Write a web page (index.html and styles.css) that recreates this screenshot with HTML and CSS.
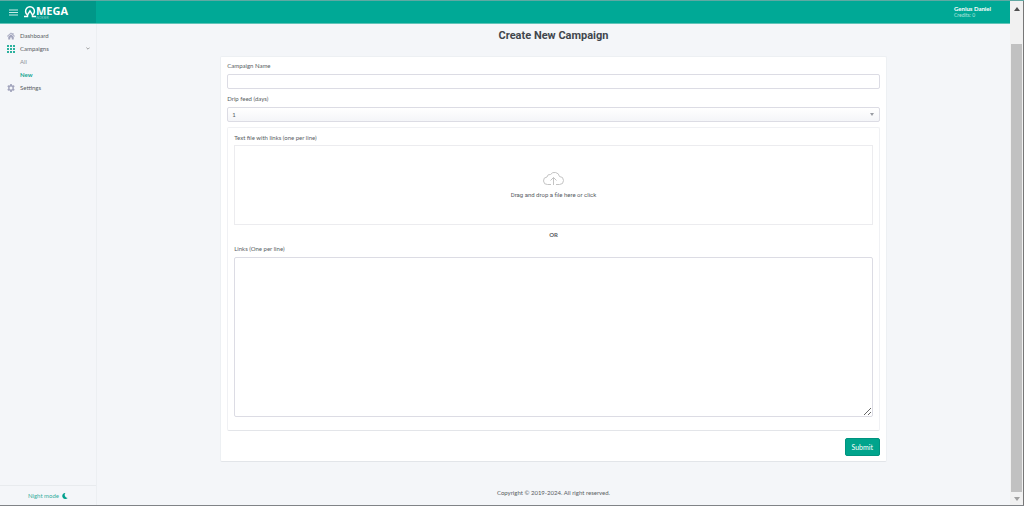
FILE: index.html
```html
<!DOCTYPE html>
<html lang="en">
<head>
<meta charset="utf-8">
<title>Create New Campaign</title>
<link rel="stylesheet" href="styles.css">
</head>
<body>
<div class="app">
  <header class="topbar">
    <div class="brand">
      <button class="menu" type="button" aria-label="Toggle menu"><svg viewBox="0 0 9 7"><path d="M0 1h9M0 3.5h9M0 6h9"/></svg></button>
      <a class="logo" href="#">
        <svg class="omega" viewBox="0 0 13 12"><path d="M0 10.800h3.800V9.200A4.800 4.800 0 1 1 9.200 9.200v1.600H13"/><path d="M3.800 9.200l2.700-4.400 2.700 4.400"/></svg>
        <span class="words"><span class="name">MEGA</span><span class="tag">INDEXER</span></span>
      </a>
    </div>
    <div class="user"><strong>Genius Daniel</strong><span>Credits: 0</span></div>
  </header>
  <aside class="sidebar">
    <nav class="nav">
      <a class="item" href="#"><svg class="icon" viewBox="0 0 16 16"><path d="M8 1l3 2.700V2h2v3.500L16 8.200l-1 1.100L8 3.200 1 9.300 0 8.200z"/><path d="M8 4.500l5.500 4.800V15h-4v-4h-3v4h-4V9.300z"/></svg>Dashboard</a>
      <a class="item" href="#"><svg class="icon green" viewBox="0 0 16 16"><path d="M0 0h4v4H0zM6 0h4v4H6zM12 0h4v4h-4zM0 6h4v4H0zM6 6h4v4H6zM12 6h4v4h-4zM0 12h4v4H0zM6 12h4v4H6zM12 12h4v4h-4z"/></svg>Campaigns<svg class="chevron" viewBox="0 0 4 3"><path d="M.4.6L2 2.200 3.600.6"/></svg></a>
      <a class="item sub" href="#">All</a>
      <a class="item sub active" href="#">New</a>
      <a class="item" href="#"><svg class="icon" viewBox="0 0 16 16"><path fill-rule="evenodd" d="M6.500 0h3l.5 2.300 1.500.8 2.300-.7 1.500 2.600L13.600 6.600v2.800L15.300 11l-1.500 2.600-2.300-.7-1.500.8L9.500 16h-3L6 13.700l-1.500-.8-2.300.7L.7 11l1.700-1.600V6.600L.7 5l1.500-2.600 2.300.7L6 2.300zM8 5a3 3 0 1 0 0 6 3 3 0 0 0 0-6z"/></svg>Settings</a>
    </nav>
    <button class="night" type="button">Night mode <svg viewBox="0 0 16 16"><path d="M9 0A8 8 0 1 0 15 13 8 8 0 0 1 9 0z"/></svg></button>
  </aside>
  <main class="main">
    <h1>Create New Campaign</h1>
    <form class="card">
      <label for="name">Campaign Name</label>
      <input class="field" id="name" type="text">
      <label for="drip">Drip feed (days)</label>
      <div class="select"><select class="field" id="drip"><option>1</option></select><svg viewBox="0 0 4 3"><path d="M0 0h4L2 3z"/></svg></div>
      <section class="panel">
        <label for="file">Text file with links (one per line)</label>
        <button class="drop" id="file" type="button">
          <svg viewBox="0 0 42 30"><path d="M16 27H9a7.500 7.500 0 0 1-1-15 6 6 0 0 1 7-5A10 10 0 0 1 33 11a8 8 0 0 1 0 16h-7M21 28V13M15 19l6-6 6 6"/></svg>
          <span>Drag and drop a file here or click</span>
        </button>
        <p class="or">OR</p>
        <label for="links">Links (One per line)</label>
        <textarea class="field" id="links"></textarea>
      </section>
      <button class="submit" type="submit">Submit</button>
    </form>
    <footer>Copyright © 2019-2024. All right reserved.</footer>
  </main>
  <div class="scroll" aria-hidden="true">
    <svg viewBox="0 0 6 4"><path d="M0 4h6L3 0z"/></svg>
    <div class="thumb"></div>
    <svg class="down" viewBox="0 0 6 4"><path d="M0 0h6L3 4z"/></svg>
  </div>
</div>
</body>
</html>
```
FILE: styles.css
```css
* { box-sizing: border-box; }
body { margin: 0; background: #f4f6f9; color: #585d63; font: 6px/8px Lato, "Noto Sans", sans-serif; }
button, input, select, textarea { font: inherit; color: inherit; }
button { padding: 0; border: 0; background: none; cursor: pointer; }
a { color: inherit; text-decoration: none; }
svg { display: block; flex: none; }

.app { display: grid; grid-template: 23px 1fr / 97px 1fr 14px; min-height: 100vh; border-top: 1px solid #5fa9a3; border-bottom: 1px solid #808387; }
.topbar { grid-column: 1 / 3; display: flex; justify-content: space-between; background: #00a996; color: #fff; border-bottom: 1px solid #61c4b8; }
.brand { display: flex; align-items: center; width: 96px; padding-left: 9px; gap: 6px; background: #009788; }
.menu svg { width: 9px; height: 7px; stroke: #c8ece7; fill: none; }
.logo { display: flex; align-items: center; }
.omega { width: 12px; height: 12px; fill: none; stroke: #fff; stroke-width: 1.6; }
.words { display: flex; flex-direction: column; }
.name { font: 700 11px/12px "Open Sans", sans-serif; }
.tag { font-size: 3px; line-height: 3px; color: #8fd0c8; }
.user { display: flex; flex-direction: column; justify-content: center; width: 56px; line-height: 7px; }
.user strong { font-weight: 700; }
.user span { color: #b5e6df; font-size: 5px; }

.sidebar { display: flex; flex-direction: column; justify-content: space-between; border-right: 1px solid #eceff2; }
.nav { padding: 5px 6px; }
.item { display: flex; align-items: center; height: 13px; gap: 5px; padding-left: 1px; }
.icon { width: 8px; height: 8px; fill: #a2a5bd; }
.green { fill: #2bb19e; }
.chevron { width: 4px; height: 3px; margin-left: auto; fill: none; stroke: #888; stroke-width: .8; }
.sub { padding-left: 14px; color: #8d9298; }
.active { color: #11a591; font-weight: 700; }
.night { display: flex; align-items: center; justify-content: center; gap: 3px; height: 20px; border-top: 1px solid #e8ebee; color: #35ae9e; }
.night svg { width: 6px; height: 6px; fill: #00a08d; }

.main { display: flex; flex-direction: column; align-items: center; }
h1 { margin: 4px 0 12px; font: 700 11px/16px Roboto, sans-serif; color: #41464d; }
.card { display: flex; flex-direction: column; width: 73%; padding: 5px 6px; background: #fff; border: 1px solid #edf0f3; border-bottom-color: #e2e5e9; border-radius: 2px; }
.field { display: block; width: 100%; height: 15px; margin: 4px 0 6px; padding: 0 5px; border: 1px solid #dcdce4; border-radius: 2px; background: #fff; outline: 0; }
.select { position: relative; margin-bottom: 5px; }
.select .field { margin-bottom: 0; padding: 0 4px; appearance: none; background: linear-gradient(#fff, #f4f5f8); }
.select svg { position: absolute; right: 6px; bottom: 6px; width: 4px; height: 3px; fill: #999ca3; }
.panel { padding: 6px 6px 13px; border: 1px solid #f0f1f4; border-bottom-color: #e3e5e9; border-radius: 2px; }
label { display: block; }
.drop { display: flex; flex-direction: column; align-items: center; justify-content: center; gap: 5px; width: 100%; height: 80px; margin-top: 3px; border: 1px solid #ececef; font-family: Roboto, sans-serif; }
.drop svg { width: 21px; height: 15px; fill: none; stroke: #c4c4c4; stroke-width: 2; }
.or { margin: 6px 0; text-align: center; font-weight: 700; }
.panel textarea { height: 160px; margin-bottom: 0; resize: vertical; }
.submit { align-self: flex-end; width: 35px; height: 18px; margin-top: 7px; border: 1px solid #00937f; border-radius: 2px; background: #00a48c; color: #fff; font-size: 7px; }
footer { margin: auto 0 8px; }

.scroll { grid-column: 3; grid-row: 1 / 3; display: flex; flex-direction: column; align-items: center; padding: 6px 1px 4px; background: #f1f1f1; border-right: 1px solid #777; }
.scroll svg { width: 6px; height: 4px; fill: #505050; }
.scroll .thumb { flex: 1; width: 100%; margin: 33px 0 5px; background: #c1c1c1; }
.scroll .down { fill: #a0a0a0; }
```
